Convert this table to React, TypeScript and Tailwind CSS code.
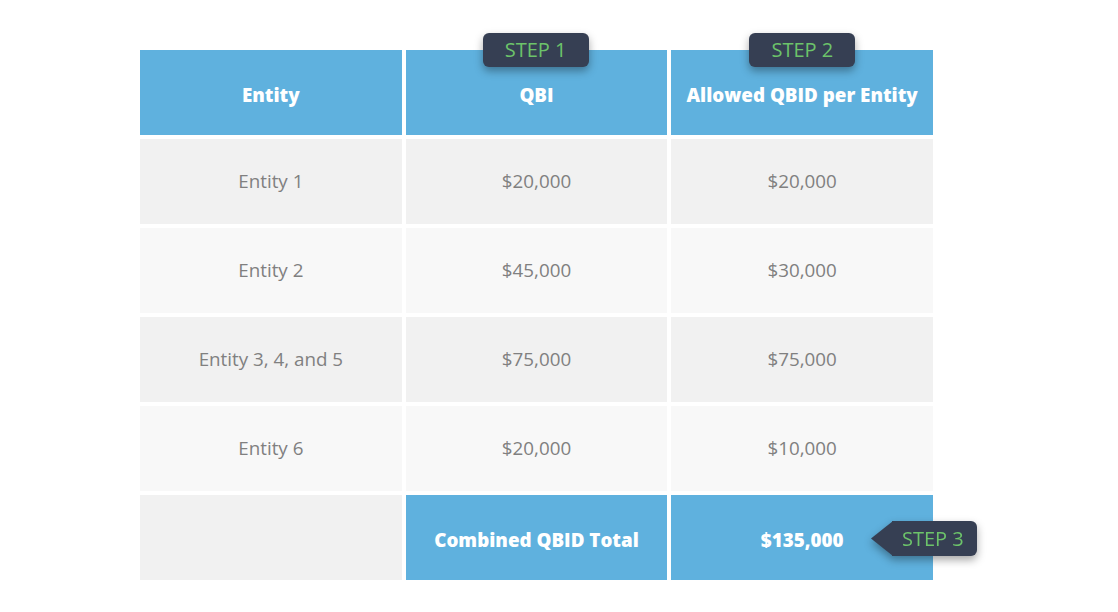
import React from 'react';

const rows = [
  { entity: 'Entity 1', qbi: '$20,000', allowed: '$20,000' },
  { entity: 'Entity 2', qbi: '$45,000', allowed: '$30,000' },
  { entity: 'Entity 3, 4, and 5', qbi: '$75,000', allowed: '$75,000' },
  { entity: 'Entity 6', qbi: '$20,000', allowed: '$10,000' },
];

function Step({ label, className }: { label: string; className: string }) {
  return (
    <div
      className={`absolute flex h-[34px] w-[106px] items-center justify-center rounded-md bg-[#363f53] text-[20px] font-normal text-[#6cc36a] shadow-[0_4px_8px_rgba(0,0,0,0.35)] ${className}`}
    >
      {label}
    </div>
  );
}

export default function App() {
  const head =
    'relative flex h-[85px] items-center justify-center bg-[#5fb1de] pt-[5px] text-[18.8px] font-extrabold text-white';
  return (
    <div className="h-[612px] w-[1118px] bg-white font-['Open_Sans',sans-serif]">
      <div className="ml-[140px] pt-[50px] grid w-[793px] grid-cols-3 gap-1">
        <div className={head}>Entity</div>
        <div className={head}>
          QBI
          <Step label="STEP 1" className="left-[77px] -top-[17px]" />
        </div>
        <div className={head}>
          Allowed QBID per Entity
          <Step label="STEP 2" className="left-[78px] -top-[17px]" />
        </div>
        {rows.map((r, i) => {
          const cell = `flex h-[85px] items-center justify-center text-[18.8px] text-[#808080] ${
            i % 2 === 0 ? 'bg-[#f1f1f1]' : 'bg-[#f8f8f8]'
          }`;
          return (
            <React.Fragment key={r.entity}>
              <div className={cell}>{r.entity}</div>
              <div className={cell}>{r.qbi}</div>
              <div className={cell}>{r.allowed}</div>
            </React.Fragment>
          );
        })}
        <div className="h-[85px] bg-[#f1f1f1]" />
        <div className={head}>Combined QBID Total</div>
        <div className={head}>
          $135,000
          <div className="absolute left-[200px] top-[26px] flex h-[35px] items-center drop-shadow-[0_4px_4px_rgba(0,0,0,0.35)]">
            <svg width="22" height="35" viewBox="0 0 22 35" className="-mr-px">
              <path d="M0 17.5 L22 0 L22 35 Z" fill="#363f53" />
            </svg>
            <div className="flex h-[35px] w-[85px] items-center justify-center rounded-r-md bg-[#363f53] pr-1 text-[20px] font-normal text-[#6cc36a]">
              STEP 3
            </div>
          </div>
        </div>
      </div>
    </div>
  );
}
